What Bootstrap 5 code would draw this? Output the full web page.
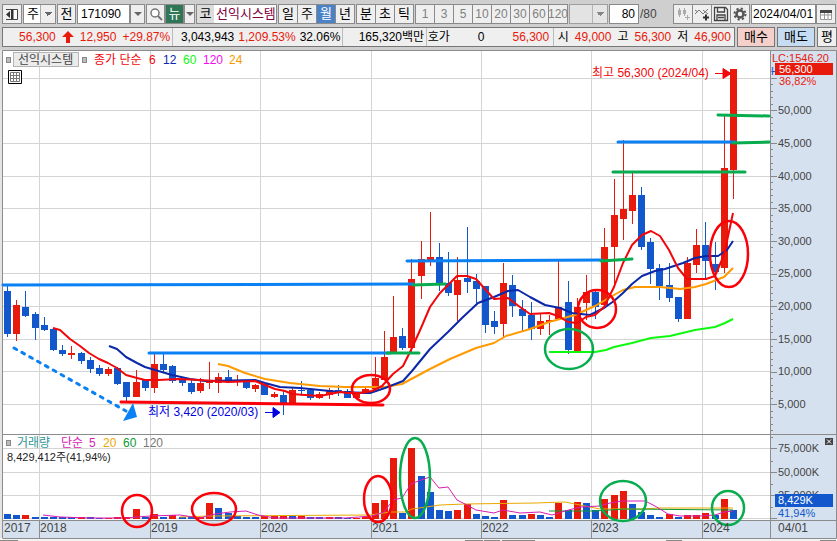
<!DOCTYPE html>
<html lang="ko">
<head>
<meta charset="utf-8">
<meta name="viewport" content="width=device-width, initial-scale=1">
<title>선익시스템 171090</title>
<link href="https://cdn.jsdelivr.net/npm/bootstrap@5.3.0/dist/css/bootstrap.min.css" rel="stylesheet">
<style>
  :root { --up: #e81a0c; --down: #1258cc; --edge: #8a8a8a; --face: #efefef; }
  body { background: #cfcfcf; color: #000; font: 12px/16px "Liberation Sans", "Noto Sans CJK KR", sans-serif; overflow-x: hidden; }
  .toolbar { padding: 4px 1px 0 2px; gap: 1px; }
  .tool, .field, .picker { height: 20px; border: 1px solid var(--edge); border-radius: 0; background: var(--face); color: #000; padding: 0; line-height: 16px; font-size: 12px; flex: none; }
  .tool { width: 20px; display: inline-flex; align-items: center; justify-content: center; }
  .tool.ko, .picker, .strip .tool { font-size: 13px; }
  .slim { width: 11px; }
  .mid { width: 15px; }
  .narrow { width: 19px; }
  .field { background: #fff; padding: 0 3px; }
  .field.code { width: 53px; }
  .field.count { width: 30px; text-align: right; }
  .field.date { width: 65px; padding: 0 1px; }
  .picker { appearance: none; width: 33px; padding-left: 3px;
    background: conic-gradient(from -45deg at 50% 100%, #666 90deg, transparent 0) right 3px center / 8px 4px no-repeat,
      linear-gradient(#aaa, #aaa) right 14px top / 1px 100% no-repeat,
      linear-gradient(var(--face), var(--face)) right top / 14px 100% no-repeat, #fff; }
  .picker.off { width: 39px; background-color: #ececec; opacity: .7; }
  .caret { width: 0; height: 0; border: 4px solid transparent; border-top-color: #666; border-bottom: 0; }
  .strip .tool + .tool { margin-left: -1px; }
  .strip.minutes .tool { font-size: 12px; color: #808080; }
  .strip .tool.on { background: #4a82c8; color: #fff; }
  .title-box { height: 20px; width: 81px; flex: none; border: 1px solid var(--edge); background: #fff; font-size: 13px; line-height: 17px; color: #800040; white-space: nowrap; overflow: hidden; }
  .title-box span { background: #dcdcdc; color: #000; width: 17px; flex: none; text-align: center; margin-right: 2px; }
  .new { background: #2f7656; color: #fff; }
  .total { width: 30px; padding-left: 1px; color: #444; }
  .quotes { padding: 3px 0 0 2px; gap: 2px; }
  .board { border: 1px solid #777; background: var(--face); height: 20px; flex: 733 1 0; min-width: 0; }
  .slot { display: flex; align-items: center; justify-content: flex-end; gap: 6px; padding: 0 2px; white-space: nowrap; min-width: 0; overflow: hidden; }
  .slot + .slot { border-left: 1px solid #bbb; }
  .s1 { flex: 172 1 0; } .s2 { flex: 172 1 0; gap: 4px; } .s3 { flex: 82 1 0; } .s4 { flex: 125 1 0; padding-right: 4px; gap: 28px; } .s5 { flex: 182 1 0; padding-right: 3px; gap: 6px; }
  .up { color: var(--up); }
  .deal { height: 20px; border: 1px solid #777; padding: 0; font-size: 13px; line-height: 16px; width: 38px; flex: none; background: #f5d0cb; }
  .deal.sell { background: #c5dcf3; }
  .deal.more { width: 20px; background: var(--face); }
  .chart { display: block; width: 100%; height: auto; margin-top: 3px; font-size: 11px; }
  .chart .ko { font-size: 12px; }
  .grid-lines path { stroke: #d4d4d4; fill: none; }
  .ma { fill: none; stroke-width: 2; stroke-linejoin: round; }
  .ma.thin { stroke-width: 1; }
  .pen { fill: none; stroke-width: 3; stroke-linecap: round; }
  .pb { stroke: #0a80f5; } .pg { stroke: #06ac4e; } .pr { stroke: #fb0008; }
  .axis { fill: #454545; }
</style>
<script src="https://cdn.jsdelivr.net/npm/bootstrap@5.3.0/dist/js/bootstrap.bundle.min.js"></script>
</head>
<body>
<header>
  <div class="toolbar d-flex align-items-center">
    <button class="tool" aria-label="패널 접기"><svg width="14" height="14" viewBox="0 0 14 14"><path d="M1 2.5h11.500v10H1M8 2v11" fill="none" stroke="#444"/><path d="M6 2h2v10H6zM5 4v7L1 7.500z" fill="#333"/><path d="M9 3h3v9H9z" fill="#fff"/></svg></button>
    <select class="picker" aria-label="종목 구분"><option>주</option></select>
    <button class="tool ko narrow">전</button>
    <div class="d-flex"><input class="field code" value="171090" aria-label="종목 코드"><button class="tool mid" aria-label="최근 종목"><span class="caret"></span></button></div>
    <div class="d-flex"><button class="tool narrow" aria-label="검색"><svg width="14" height="14" viewBox="0 0 14 14"><circle cx="6" cy="6" r="4" fill="#fff" stroke="#777" stroke-width="1.500"/><path d="M9 9l4 4" stroke="#777" stroke-width="2"/></svg></button>
    <button class="tool ko new narrow">뉴</button><button class="tool slim" aria-label="뉴스 메뉴"><span class="caret"></span></button></div>
    <div class="title-box d-flex"><span>코</span>선익시스템</div>
    <div class="strip d-flex"><button class="tool">일</button><button class="tool">주</button><button class="tool on">월</button><button class="tool">년</button></div>
    <div class="strip d-flex"><button class="tool">분</button><button class="tool">초</button><button class="tool">틱</button></div>
    <div class="strip minutes d-flex"><button class="tool">1</button><button class="tool">3</button><button class="tool">5</button><button class="tool">10</button><button class="tool">20</button><button class="tool">30</button><button class="tool">60</button><button class="tool">120</button></div>
    <select class="picker off" aria-label="주기" disabled><option></option></select>
    <div class="d-flex align-items-center me-auto"><input class="field count" value="80" aria-label="조회 개수"><span class="total">/80</span></div>
    <div class="strip d-flex">
      <button class="tool" aria-label="봉 추가" disabled><svg width="16" height="14" viewBox="0 0 16 14"><path d="M4.500 1v9M9.500 1v8M12.500 8v5M10 10.500h5" stroke="#aaa" fill="none" stroke-width="1"/><path d="M3 3h3v5H3zM8 3h3v4H8z" fill="#aaa"/></svg></button>
      <button class="tool" aria-label="지표 추가"><svg width="16" height="14" viewBox="0 0 16 14"><path d="M1 7l4-4 4 4 5-5M1 3l3 2M9 3l5 4" fill="none" stroke="#777"/><path d="M12 7.500v6M9 10.500h6" stroke="#333" stroke-width="2"/></svg></button>
      <button class="tool" aria-label="저장"><svg width="16" height="16" viewBox="0 0 16 16"><path d="M1.500 1.500h11l2 2v11h-13zM4.500 2v4h7V2M4 14V9h8v5M5 11.500h6" fill="none" stroke="#444" stroke-width="1.300"/></svg></button>
      <button class="tool" aria-label="설정"><svg width="14" height="14" viewBox="0 0 14 14"><circle cx="7" cy="7" r="3.500" fill="none" stroke="#555" stroke-width="2.500"/><circle cx="7" cy="7" r="5.500" fill="none" stroke="#555" stroke-width="2" stroke-dasharray="2.200 2.120"/></svg></button>
    </div>
    <div class="d-flex"><input class="field date" value="2024/04/01" aria-label="기준일"><button class="tool" aria-label="달력"><svg width="12" height="11" viewBox="0 0 12 11"><path d="M.5 1.500h11v9H.5zM.5 6h11M4.500 3v7M8 3v7" fill="#fff" stroke="#999"/><path d="M0 1h12v3H0z" fill="#444"/></svg></button></div>
  </div>
  <div class="quotes d-flex">
    <div class="board d-flex">
      <div class="slot s1 up"><span>56,300</span><svg width="12" height="12" viewBox="0 0 12 12"><path d="M6 0l6 6H8v6H4V6H0z" fill="#e81a0c"/></svg><span>12,950</span><span>+29.87%</span></div>
      <div class="slot s2"><span>3,043,943</span><span class="up">1,209.53%</span><span>32.06%</span></div>
      <div class="slot s3">165,320백만</div>
      <div class="slot s4"><span class="me-auto">호가</span><span>0</span><span class="up">56,300</span></div>
      <div class="slot s5"><span>시</span><span class="up">49,000</span><span>고</span><span class="up">56,300</span><span>저</span><span class="up">46,900</span></div>
    </div>
    <button class="deal">매수</button><button class="deal sell">매도</button><button class="deal more">평</button>
  </div>
</header>
<main>
<svg class="chart" viewBox="0 50 837 491" role="img" aria-label="선익시스템 월봉 차트">
  <rect x="0" y="50" width="3" height="491" fill="#e4e4e4"/>
  <rect x="0" y="538" width="837" height="3" fill="#f2f2f2"/>
  <rect x="3" y="51" width="767" height="469" fill="#fff"/>
  <path d="M770 51h66v487H3v-18h767z" fill="#d6e1ef"/>
  <g class="grid-lines"><path d="M3 78.500h767M3 110.500h767M3 143.500h767M3 176.500h767M3 208.500h767M3 241.500h767M3 273.500h767M3 306.500h767M3 339.500h767M3 371.500h767M3 404.500h767M3 448.500h767M3 472.500h767M3 495.500h767M3 518.500h767"/>
  <path d="M39.500 51v469M150.500 51v469M260.500 51v469M371.500 51v469M481.500 51v469M591.500 51v469M702.500 51v469"/></g>
  <path d="M2.500 538V50.500h834V538.500H2.500M3 434.500h833M3 520.500h833M770.500 51v487M39.500 520v18M150.500 520v18M260.500 520v18M371.500 520v18M481.500 520v18M591.500 520v18M702.500 520v18" fill="none" stroke="#8c8c8c"/>
  <path id="ticks" stroke="#888" fill="none"/>
  <path d="M0 540.500h18M465 540.500h18M484 540.500h16M502 540.500h33M666 540.500h16M820 540.500h16" stroke="#888"/>
  <g id="volume" shape-rendering="crispEdges"></g>
  <g id="candles"></g>
  <g>
    <polyline class="ma" stroke="#ff9a00" points="218,364 228,366 245,373 265,379 290,383 320,386 345,387 385,387 402,384 430,369 450,359 476,348 494,343 506,336 530,329 549,322 575,315 595,306 614,295 623,290 635,287 660,287 680,289 695,287 706,284 724,277 733,268"/>
    <polyline class="ma" stroke="#0ff80f" points="549,352 595,352 606,350 614,347 632,343 651,338 670,336 695,330 715,327 725,323 733,319"/>
    <polyline class="ma" stroke="#0a28a8" points="109,346 117,349 126,357 137,363 145,367 155,370 172,375 190,379 205,381 255,380 265,383 280,387 300,388 320,390 340,392 370,393 385,388 403,381 412,371 430,349 448,332 462,318 478,303 494,297 508,291 518,290 530,297 545,305 560,308 572,313 590,315 604,308 614,301 623,293 632,284 642,276 655,271 665,269 683,263 695,258 706,256 718,256 727,250 733,241"/>
    <polyline class="ma" stroke="#f2060a" points="53,328 60,330 70,339 80,346 89,353 99,359 108,363 117,368 126,375 137,378 145,380 158,380 178,379 200,380 228,382 255,381 265,385 275,389 285,391 292,394 305,395 320,396 340,392 348,393 360,393 372,391 382,386 393,374 403,366 412,348 421,328 430,307 440,293 448,285 457,276 467,276 476,279 485,289 494,299 508,298 520,307 530,314 549,313 558,316 568,322 577,323 586,317 595,315 604,307 614,287 623,263 632,245 642,235 651,231 660,236 669,250 678,268 687,279 706,279 715,276 724,255 733,213"/>
    <polyline class="ma thin" stroke="#e8a800" points="180,517 210,516 370,515 390,512 405,512 412,509 440,505 465,504 535,503 565,502 580,505 600,509 640,509 660,508 733,508"/>
    <polyline class="ma thin" stroke="#0c9a34" points="549,511 595,511 625,509 733,510"/>
    <polyline class="ma thin" stroke="#d81cb4" points="43,515 60,517 90,518 125,518 150,516 180,515 200,518 215,514 230,512 246,511 258,515 275,518 345,518 372,516 384,512 393,500 402,498 411,484 421,480 430,477 439,488 448,487 457,500 467,505 476,510 494,513 503,510 520,513 540,512 552,515 565,511 580,507 600,506 610,503 622,501 645,501 655,506 668,514 680,516 700,516 715,515 724,512 733,511"/>
  </g>
  <g class="pen">
    <path class="pb" d="M3 285L413 284M149 353H390M407 261L602 260M618 142H735"/>
    <path class="pb" d="M14 348L126 411" stroke-dasharray="3 6"/>
    <path d="M133 403l4 14-14 4z" fill="#0a80f5"/>
    <path class="pg" d="M413 285L445 284M387 353H419M601 261L632 259M733 143L769 142M613 172H745M718 115L769 116"/>
    <path class="pr" d="M121 402L383 405"/>
    <g class="pr" stroke-width="2.500"><ellipse cx="371" cy="389" rx="19" ry="14"/><ellipse cx="597" cy="309" rx="19" ry="19"/><ellipse cx="729" cy="254" rx="19" ry="33"/><ellipse cx="137" cy="511" rx="15" ry="16"/><ellipse cx="214" cy="509" rx="22" ry="16"/><ellipse cx="378" cy="499" rx="14" ry="23"/></g>
    <g class="pg" stroke-width="2.500"><ellipse cx="569" cy="349" rx="24" ry="20"/><ellipse cx="415" cy="478" rx="15" ry="40"/><ellipse cx="623" cy="501" rx="23" ry="20"/><ellipse cx="728" cy="508" rx="16" ry="17"/></g>
  </g>
  <g class="ko">
    <rect x="6.500" y="57.500" width="4" height="5" fill="#bbb" stroke="#888"/>
    <rect x="13.500" y="52.500" width="65" height="14" fill="#ebebeb" stroke="#b4b4b4"/>
    <text x="18" y="64" fill="#444">선익시스템</text>
    <rect x="82.500" y="57.500" width="4" height="5" fill="#bbb" stroke="#888"/>
    <text y="64" fill="#f2060a"><tspan x="94">종가 단순</tspan><tspan x="149">6</tspan><tspan x="163" fill="#0a28a8">12</tspan><tspan x="183" fill="#0ff80f">60</tspan><tspan x="203" fill="#f20cf2">120</tspan><tspan x="229" fill="#f59a00">24</tspan></text>
    <path d="M8.500 70.500h13v13h-13z" fill="#fff" stroke="#000"/><path d="M10.500 72.500h9v9h-9zM10 75.500h10M10 78.500h10M13.500 72v9M16.500 72v9" fill="none" stroke="#777"/>
    <rect x="6.500" y="440.500" width="4" height="5" fill="#bbb" stroke="#888"/>
    <text y="447" fill="#d81cb4"><tspan x="17" fill="#2f9494">거래량</tspan><tspan x="61">단순</tspan><tspan x="89">5</tspan><tspan x="103" fill="#e8a800">20</tspan><tspan x="123" fill="#0c9a34">60</tspan><tspan x="143" fill="#777">120</tspan></text>
    <text x="592" y="77" fill="#f2060a">최고 56,300 (2024/04)</text>
    <path d="M715 73.500h8M723 68.500v10l8-5z" stroke="#f2060a" fill="#f2060a"/>
    <text x="148" y="416" fill="#0000e0">최저 3,420 (2020/03)</text>
    <path d="M265 412.500h8M273 407.500v10l7-5z" stroke="#0000e0" fill="#0000e0"/>
  </g>
  <text x="7" y="461" fill="#222">8,429,412주(41,94%)</text>
  <g class="axis">
    <text x="778" y="114">50,000</text><text x="778" y="147">45,000</text><text x="778" y="180">40,000</text><text x="778" y="212">35,000</text><text x="778" y="245">30,000</text><text x="778" y="277">25,000</text><text x="778" y="310">20,000</text><text x="778" y="343">15,000</text><text x="778" y="375">10,000</text><text x="778" y="408">5,000</text>
    <text x="778" y="452">75,000K</text><text x="778" y="476">50,000K</text><text x="778" y="499">25,000K</text>
    <g class="ko"><text x="4" y="532">2017</text><text x="40" y="532">2018</text><text x="151" y="532">2019</text><text x="261" y="532">2020</text><text x="372" y="532">2021</text><text x="482" y="532">2022</text><text x="592" y="532">2023</text><text x="703" y="532">2024</text><text x="778" y="532">04/01</text></g>
  </g>
  <g fill="#e81a0c"><text x="772" y="62">LC:1546.20</text><text x="771" y="75" fill="#1258cc">H</text><rect x="775" y="63" width="58" height="12"/><text x="779" y="73" fill="#fff">56,300</text><text x="779" y="85">36,82%</text></g>
  <g fill="#1258cc"><rect x="775" y="494" width="58" height="13"/><text x="778" y="504" fill="#fff">8,429K</text><text x="778" y="517">41,94%</text></g>
  <rect x="825" y="438" width="8" height="7" fill="#444"/><path d="M827 439.500l4 4M831 439.500l-4 4" stroke="#fff"/>
</svg>
</main>
<script>
// Monthly bars: direction, high, open/close top, open/close bottom, low, volume top (chart units).
// A letter after the volume overrides the colour of the volume bar.
const bars = `
d 286 291 334 337 514|u 300 305 334 341 515d|d 291 307 316 317 515u|d 312 314 328 340 517|d 317 325 330 331 517
d 328 329 350 351 517|d 345 350 354 356 517|u 346 353 355 359 517d|d 352 353 361 364 517u|d 357 360 369 373 517
d 365 368 374 376 518|u 367 369 374 376 518|d 367 368 384 385 517u|d 382 382 397 402 517u|u 370 382 397 397 509
d 379 380 388 391 517|u 354 364 388 393 514|d 354 364 370 373 517|d 365 366 381 383 515u|d 378 380 383 386 517
d 380 383 392 394 517|u 378 383 391 393 517|u 362 381 383 389 503|u 373 377 383 393 508d|d 370 377 382 382 513
u 375 381 382 386 516d|d 380 382 388 389 517|u 384 385 389 392 517d|d 384 384 395 395 516u|u 392 394 397 398 516
d 391 395 403 415 516u|u 387 390 403 403 516d|d 381 390 391 396 516u|d 389 390 398 400 517|u 392 394 398 399 517d
u 388 390 395 399 517|d 385 390 391 396 517|d 389 391 398 398 518|u 393 394 398 399 518|u 388 389 394 394 517
u 357 378 389 389 503|u 331 357 380 380 500|u 296 337 352 352 458|d 328 336 348 350 513|u 259 279 348 354 448
u 241 259 276 299 476d|u 212 257 260 266 492d|d 243 257 283 291 510|d 252 283 293 296 511|u 257 280 295 321 510
d 227 278 282 293 504u|d 274 281 289 303 514|d 286 286 325 333 516|d 311 321 327 334 517|u 263 283 324 337 500
d 275 285 306 317 515|d 300 309 316 331 515|d 302 315 329 340 514u|u 313 321 329 335 515d|u 315 320 322 335 517d
u 261 307 319 320 503|d 281 302 350 354 510|u 298 307 351 352 502|u 275 292 303 320 503d|d 290 292 307 319 510
u 228 247 305 306 499|u 179 215 247 287 495|u 140 209 219 240 491|u 173 195 211 224 504d|d 187 195 247 250 512
d 238 242 269 284 515|d 264 268 286 300 517|d 263 285 298 302 514u|d 297 297 319 322 517|u 257 263 319 319 515
u 229 245 265 273 515|d 222 245 261 280 513u|d 242 264 272 290 515|u 116 168 268 273 499|u 69 69 170 199 510d`
  .trim().split(/[|\n]/).map(r => r.split(' '));
const fill = { u: '#e81a0c', d: '#1258cc' };
let candles = '', volume = '';
bars.forEach(([dir, high, top, bottom, low, vol], i) => {
  const x = Math.round(7 + i * 9.19), v = parseInt(vol), vd = /[ud]$/.test(vol) ? vol.slice(-1) : dir;
  candles += `<path fill="${fill[dir]}" d="M${x} ${high}h1V${low}h-1zM${x - 3} ${top}h7V${bottom}h-7z"/>`;
  volume += `<path fill="${fill[vd]}" d="M${x - 3} ${v}h7V519h-7z"/>`;
});
document.getElementById('candles').innerHTML = candles;
document.getElementById('volume').innerHTML = volume;
let ticks = '';
for (let k = 1; k <= 56; k++) ticks += `M771 ${Math.round(437 - k * 6.535) + .5}h${k % 5 ? 2 : 6}`;
[437, 448, 461, 472, 484, 495, 507, 518].forEach((y, i) => ticks += `M771 ${y + .5}h${i % 2 ? 6 : 2}`);
document.getElementById('ticks').setAttribute('d', ticks);
</script>
</body>
</html>
